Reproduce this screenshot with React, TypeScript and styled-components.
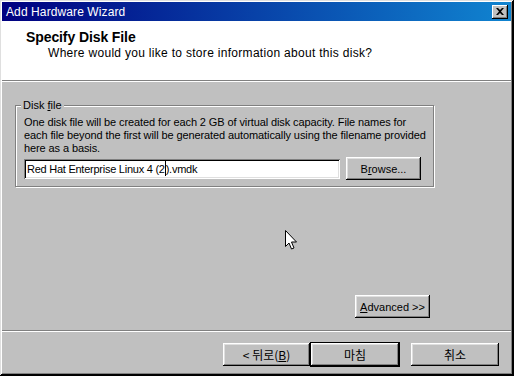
import styled, { createGlobalStyle, css } from 'styled-components';

const GlobalStyle = createGlobalStyle`
  html, body {
    margin: 0;
    padding: 0;
    background: #c0c0c0;
  }
  * {
    box-sizing: border-box;
  }
`;

const uiFont = `"Liberation Sans", "Noto Sans CJK KR", sans-serif`;

const Window = styled.div`
  position: relative;
  width: 514px;
  height: 376px;
  display: flex;
  flex-direction: column;
  padding: 2px 3px 3px 2px;
  background: #c0c0c0;
  font-family: ${uiFont};
  color: #000;
  box-shadow: inset -1px -1px #000, inset 1px 1px #dfdfdf, inset -2px -2px #000,
    inset 2px 2px #fff, inset -3px -3px #808080;
`;

const TitleBar = styled.div`
  height: 19px;
  display: flex;
  align-items: center;
  justify-content: space-between;
  padding: 0 3px 0 4px;
  background: linear-gradient(90deg, #000080 0%, #1084d0 100%);
`;

const TitleText = styled.span`
  color: #fff;
  font-size: 12px;
  letter-spacing: 0.1px;
`;

const CloseButton = styled.div`
  width: 16px;
  height: 14px;
  display: flex;
  align-items: center;
  justify-content: center;
  background: #c0c0c0;
  box-shadow: inset -1px -1px #000, inset 1px 1px #fff, inset -2px -2px #808080;
`;

const Header = styled.div`
  height: 59px;
  background: #fff;
  padding: 8px 0 0 24px;
`;

const HeaderTitle = styled.div`
  font-weight: bold;
  font-size: 14px;
  line-height: 16px;
  letter-spacing: -0.1px;
`;

const HeaderSub = styled.div`
  font-size: 12px;
  line-height: 17px;
  letter-spacing: 0.3px;
  padding-left: 22px;
`;

const Divider = styled.div`
  height: 2px;
  border-top: 1px solid #808080;
  border-bottom: 1px solid #fff;
`;

const Body = styled.div`
  flex: 1;
  display: flex;
  flex-direction: column;
  padding: 17px 81px 0 13px;
`;

const GroupBox = styled.fieldset`
  margin: 0;
  padding: 4px 7px 6px 8px;
  border: 1px solid #808080;
  box-shadow: inset 1px 1px #fff, 1px 1px #fff;
`;

const Legend = styled.legend`
  padding: 0 2px;
  margin-left: -3px;
  font-size: 11px;
  line-height: 13px;
  background: #c0c0c0;
`;

const DescLine = styled.div`
  font-size: 11px;
  line-height: 13px;
  letter-spacing: -0.1px;
  white-space: nowrap;
`;

const FileRow = styled.div`
  display: flex;
  align-items: center;
  gap: 6px;
  margin-top: 2px;
`;

const TextField = styled.div`
  width: 316px;
  height: 20px;
  display: flex;
  align-items: center;
  padding-left: 3px;
  background: #fff;
  font-size: 11px;
  letter-spacing: -0.25px;
  white-space: pre;
  box-shadow: inset 1px 1px #808080, inset -1px -1px #fff, inset 2px 2px #000,
    inset -2px -2px #dfdfdf;
`;

const Caret = styled.span`
  display: inline-block;
  width: 1px;
  height: 15px;
  background: #000;
`;

const Button = styled.div<{ $width?: number; $default?: boolean }>`
  width: ${p => p.$width ?? 75}px;
  height: 23px;
  display: flex;
  align-items: center;
  justify-content: center;
  background: #c0c0c0;
  font-size: 11px;
  box-shadow: inset -1px -1px #000, inset 1px 1px #fff, inset -2px -2px #808080,
    inset 2px 2px #dfdfdf;
  ${p =>
    p.$default &&
    css`
      outline: 1px solid #000;
    `}
`;

const AdvancedRow = styled.div`
  display: flex;
  justify-content: flex-end;
  margin-top: auto;
  margin-bottom: 12px;
`;

const Footer = styled.div`
  height: 41px;
  display: flex;
  justify-content: flex-end;
  align-items: flex-start;
  padding: 11px 12px 0 0;
`;

const KoText = styled.span`
  font-family: "Noto Sans CJK KR", ${uiFont};
  font-size: 12px;
`;

const Cursor = styled.svg`
  position: absolute;
  left: 285px;
  top: 230px;
`;

export default function App() {
  return (
    <>
      <GlobalStyle />
      <Window>
        <TitleBar>
          <TitleText>Add Hardware Wizard</TitleText>
          <CloseButton>
            <svg width="8" height="7" viewBox="0 0 8 7">
              <path d="M0 0h2l2 2 2-2h2L5 3.5 8 7H6L4 5 2 7H0l3-3.5z" fill="#000" />
            </svg>
          </CloseButton>
        </TitleBar>
        <Header>
          <HeaderTitle>Specify Disk File</HeaderTitle>
          <HeaderSub>Where would you like to store information about this disk?</HeaderSub>
        </Header>
        <Divider />
        <Body>
          <GroupBox>
            <Legend>
              Disk <u>f</u>ile
            </Legend>
            <DescLine>
              One disk file will be created for each 2 GB of virtual disk capacity. File names for
            </DescLine>
            <DescLine>
              each file beyond the first will be generated automatically using the filename provided
            </DescLine>
            <DescLine>here as a basis.</DescLine>
            <FileRow>
              <TextField>
                Red Hat Enterprise Linux 4 (2
                <Caret />
                ).vmdk
              </TextField>
              <Button>
                B<u>r</u>owse...
              </Button>
            </FileRow>
          </GroupBox>
          <AdvancedRow>
            <Button>
              <u>A</u>dvanced &gt;&gt;
            </Button>
          </AdvancedRow>
        </Body>
        <Divider />
        <Footer>
          <Button $width={87}>
            <KoText>
              &lt; 뒤로(<u>B</u>)
            </KoText>
          </Button>
          <Button $width={88} $default style={{ marginLeft: 1 }}>
            <KoText>마침</KoText>
          </Button>
          <Button $width={88} style={{ marginLeft: 12 }}>
            <KoText>취소</KoText>
          </Button>
        </Footer>
        <Cursor width="13" height="21" viewBox="0 0 13 21">
          <path
            d="M0.5 0.5v16l3.5-3.5 2.5 6 2.5-1-2.5-6h5z"
            fill="#fff"
            stroke="#000"
            strokeWidth="1"
          />
        </Cursor>
      </Window>
    </>
  );
}
